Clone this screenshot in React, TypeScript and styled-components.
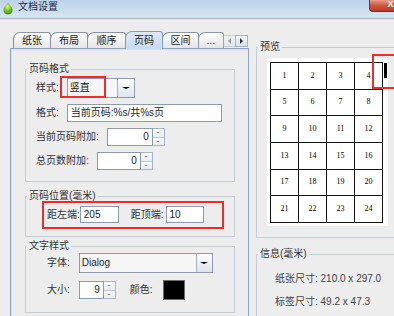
import React from "react";
import styled, { createGlobalStyle } from "styled-components";

const GlobalStyle = createGlobalStyle`
  html, body { margin: 0; padding: 0; }
  body {
    font-family: "Liberation Sans", "Noto Sans CJK SC", sans-serif;
    font-size: 10px;
    line-height: 12px;
    color: #333;
    background: #ededed;
  }
  *, *::before, *::after { box-sizing: border-box; }
`;

const Window = styled.div`
  width: 394px;
  height: 316px;
  overflow: hidden;
  display: flex;
  flex-direction: column;
  background: #ededed;
`;

const TitleBar = styled.div`
  height: 19px;
  flex-shrink: 0;
  display: flex;
  align-items: flex-start;
  background: linear-gradient(180deg, #bcd1ea 0%, #cddded 55%, #d8e5f3 100%);
  border-bottom: 1px solid #a3b1c2;
`;

const AppIcon = styled.svg`
  margin: 2px 0 0 3px;
  flex-shrink: 0;
`;

const Title = styled.span`
  margin: 1px 0 0 5px;
  color: #1e2a38;
`;

const CloseButton = styled.div`
  margin-left: auto;
  margin-right: -18px;
  width: 43px;
  height: 12px;
  flex-shrink: 0;
  border: 1px solid #7a2c22;
  border-top: none;
  border-radius: 0 0 4px 4px;
  background: linear-gradient(180deg, #e79a88 0%, #d0563f 50%, #b83a24 100%);
  color: #fff;
  font-weight: bold;
  font-size: 9px;
  line-height: 9px;
  text-align: center;
`;

const Body = styled.div`
  flex: 1;
  display: flex;
  min-height: 0;
`;

const LeftCol = styled.div`
  width: 239px;
  flex-shrink: 0;
  margin-left: 10px;
  padding-top: 12px;
  display: flex;
  flex-direction: column;
`;

const TabStrip = styled.div`
  height: 17px;
  flex-shrink: 0;
  display: flex;
  align-items: flex-end;
  padding-left: 4px;
`;

const Tab = styled.div<{ $w: number; $active?: boolean }>`
  position: relative;
  z-index: ${(p) => (p.$active ? 2 : 1)};
  width: ${(p) => p.$w}px;
  height: ${(p) => (p.$active ? 18 : 16)}px;
  margin-left: -1px;
  margin-bottom: ${(p) => (p.$active ? -1 : 0)}px;
  border: 1px solid ${(p) => (p.$active ? "#7f9cc2" : "#8a96a5")};
  border-bottom: none;
  border-radius: 7px 3px 0 0;
  background: ${(p) =>
    p.$active
      ? "linear-gradient(180deg, #dde9f7 0%, #c8dbf1 100%)"
      : "linear-gradient(180deg, #fdfdfd 0%, #e5e5e5 100%)"};
  display: flex;
  align-items: center;
  justify-content: center;
  color: #222;
  white-space: nowrap;
  overflow: hidden;
`;

const ScrollButton = styled.div<{ $disabled?: boolean }>`
  position: relative;
  z-index: 3;
  width: 13px;
  height: 12px;
  margin: 0 0 1px -1px;
  border: 1px solid #a7b5c6;
  background: linear-gradient(180deg, #f4f7fa 0%, #d9e2ec 100%);
  display: flex;
  align-items: center;
  justify-content: center;
  opacity: ${(p) => (p.$disabled ? 0.55 : 1)};
`;

type Dir = "up" | "down" | "left" | "right";

const Tri = styled.span<{ $dir: Dir; $s: number; $c: string }>`
  width: 0;
  height: 0;
  ${({ $dir, $s, $c }) => {
    const h = Math.round($s * 0.6);
    if ($dir === "up")
      return `border-left:${$s}px solid transparent;border-right:${$s}px solid transparent;border-bottom:${h}px solid ${$c};`;
    if ($dir === "down")
      return `border-left:${$s}px solid transparent;border-right:${$s}px solid transparent;border-top:${h}px solid ${$c};`;
    if ($dir === "left")
      return `border-top:${$s}px solid transparent;border-bottom:${$s}px solid transparent;border-right:${h + 1}px solid ${$c};`;
    return `border-top:${$s}px solid transparent;border-bottom:${$s}px solid transparent;border-left:${h + 1}px solid ${$c};`;
  }}
`;

const TabPanel = styled.div`
  flex: 1;
  border: 1px solid #8ea6c5;
  border-bottom: none;
  box-shadow: inset 1px 1px 0 #d4e0ee;
  padding: 14px 13px 0 14px;
  display: flex;
  flex-direction: column;
`;

const Group = styled.fieldset<{ $mt?: number }>`
  margin: ${(p) => p.$mt ?? 0}px 0 0 0;
  padding: 0;
  border: 1px solid #c4ccd6;
  min-width: 0;
`;

const Legend = styled.legend`
  padding: 0 2px;
  margin-left: 1px;
  line-height: 12px;
  color: #333;
`;

const GroupBody = styled.div<{ $pad: string; $gap?: number }>`
  padding: ${(p) => p.$pad};
  display: flex;
  flex-direction: column;
  gap: ${(p) => p.$gap ?? 0}px;
`;

const Row = styled.div<{ $h?: number }>`
  position: relative;
  display: flex;
  align-items: center;
  height: ${(p) => p.$h ?? 18}px;
`;

const Label = styled.span<{ $mr?: number; $ml?: number }>`
  margin-right: ${(p) => p.$mr ?? 8}px;
  margin-left: ${(p) => p.$ml ?? 0}px;
  white-space: nowrap;
  color: #333;
`;

const Field = styled.div<{ $w: number; $h?: number; $right?: boolean }>`
  width: ${(p) => p.$w}px;
  height: ${(p) => p.$h ?? 18}px;
  border: 1px solid #8c9bb0;
  background: #fff;
  padding: 0 3px;
  line-height: ${(p) => (p.$h ?? 18) - 2}px;
  color: #222;
  text-align: ${(p) => (p.$right ? "right" : "left")};
  white-space: nowrap;
  overflow: hidden;
`;

const Combo = styled.div<{ $w: number }>`
  width: ${(p) => p.$w}px;
  height: 20px;
  display: flex;
  border: 1px solid #8c9bb0;
  background: #f6f6f6;
`;

const ComboText = styled.span`
  flex: 1;
  padding-left: 2px;
  line-height: 18px;
  color: #222;
`;

const ComboButton = styled.div<{ $w: number }>`
  width: ${(p) => p.$w}px;
  border-left: 1px solid #a5b2c2;
  background: linear-gradient(180deg, #fdfdfe 0%, #dde4ec 100%);
  display: flex;
  align-items: center;
  justify-content: center;
`;

const SpinButtons = styled.div`
  width: 12px;
  height: 18px;
  display: flex;
  flex-direction: column;
  border: 1px solid #a9b5c4;
  border-left: none;
`;

const SpinHalf = styled.div`
  flex: 1;
  display: flex;
  align-items: center;
  justify-content: center;
  background: linear-gradient(180deg, #fbfcfd 0%, #e7ecf1 100%);
  & + & {
    border-top: 1px solid #c2ccd8;
  }
`;

const Swatch = styled.div`
  width: 22px;
  height: 20px;
  background: #000;
  border: 1px solid #6a6a6a;
`;

const RedMark = styled.div`
  position: absolute;
  border: 2px solid #ee2c2c;
  pointer-events: none;
`;

const RedFrame = styled.div`
  margin: -1px 0 0 16px;
  width: 182px;
  border: 2px solid #ee2c2c;
  padding: 3px 0 4px 3px;
  display: flex;
  align-items: center;
`;

const RightCol = styled.div`
  width: 150px;
  flex-shrink: 0;
  margin-left: 7px;
  padding-top: 22px;
  display: flex;
  flex-direction: column;
`;

const PreviewArea = styled.div`
  position: relative;
  width: 121px;
  height: 168px;
  background: #fff;
  padding: 4px 0 0 3px;
`;

const PageGrid = styled.div`
  width: 113px;
  height: 161px;
  display: grid;
  grid-template-columns: repeat(4, 1fr);
  grid-template-rows: repeat(6, 1fr);
  gap: 1px;
  border: 1px solid #111;
  background: #111;
`;

const Cell = styled.div`
  background: #fff;
  display: flex;
  align-items: center;
  justify-content: center;
  font-family: "Liberation Serif", serif;
  font-size: 8px;
  color: #000;
`;

const Cursor = styled.div`
  position: absolute;
  left: 117px;
  top: 5px;
  width: 3px;
  height: 15px;
  background: #000;
`;

const InfoLine = styled.div`
  line-height: 12px;
  color: #444;
  white-space: nowrap;
`;

function Spinner({ w, value }: { w: number; value: string }) {
  return (
    <>
      <Field $w={w} $right>
        {value}
      </Field>
      <SpinButtons>
        <SpinHalf>
          <Tri $dir="up" $s={2} $c="#666" />
        </SpinHalf>
        <SpinHalf>
          <Tri $dir="down" $s={2} $c="#666" />
        </SpinHalf>
      </SpinButtons>
    </>
  );
}

const tabs = [
  { name: "纸张", w: 38 },
  { name: "布局", w: 38 },
  { name: "顺序", w: 39 },
  { name: "页码", w: 38, active: true },
  { name: "区间", w: 37 },
  { name: "...", w: 26 },
];

export default function App() {
  const pages = Array.from({ length: 24 }, (_, i) => i + 1);
  return (
    <>
      <GlobalStyle />
      <Window>
        <TitleBar>
          <AppIcon width="10" height="13" viewBox="0 0 10 13">
            <defs>
              <radialGradient id="drop" cx="45%" cy="35%" r="70%">
                <stop offset="0" stopColor="#f1f78a" />
                <stop offset="0.45" stopColor="#7fcc2e" />
                <stop offset="1" stopColor="#2f7d12" />
              </radialGradient>
            </defs>
            <path
              d="M5 0.5 C6.2 2.6 9.5 4.6 9.5 8 A4.5 4.5 0 0 1 0.5 8 C0.5 4.6 3.8 2.6 5 0.5Z"
              fill="url(#drop)"
            />
          </AppIcon>
          <Title>文档设置</Title>
          <CloseButton>X</CloseButton>
        </TitleBar>
        <Body>
          <LeftCol>
            <TabStrip>
              {tabs.map((t) => (
                <Tab key={t.name} $w={t.w} $active={t.active}>
                  {t.name}
                </Tab>
              ))}
              <ScrollButton $disabled>
                <Tri $dir="left" $s={3} $c="#556" />
              </ScrollButton>
              <ScrollButton>
                <Tri $dir="right" $s={3} $c="#334" />
              </ScrollButton>
            </TabStrip>
            <TabPanel>
              <Group>
                <Legend>页码格式</Legend>
                <GroupBody $pad="3px 0 11px 10px" $gap={6}>
                  <Row $h={20}>
                    <Label>样式:</Label>
                    <Combo $w={68}>
                      <ComboText>竖直</ComboText>
                      <ComboButton $w={17}>
                        <Tri $dir="down" $s={4} $c="#000" />
                      </ComboButton>
                    </Combo>
                    <RedMark style={{ left: 24, top: -2, width: 46, height: 22 }} />
                  </Row>
                  <Row>
                    <Label>格式:</Label>
                    <Field $w={155}>当前页码:%s/共%s页</Field>
                  </Row>
                  <Row>
                    <Label>当前页码附加:</Label>
                    <Spinner w={46} value="0" />
                  </Row>
                  <Row>
                    <Label>总页数附加:</Label>
                    <Spinner w={44} value="0" />
                  </Row>
                </GroupBody>
              </Group>

              <Group $mt={8}>
                <Legend>页码位置(毫米)</Legend>
                <GroupBody $pad="0 0 7px 0">
                  <RedFrame>
                    <Label $mr={0}>距左端:</Label>
                    <Field $w={39} $h={17}>
                      205
                    </Field>
                    <Label $ml={12} $mr={2}>
                      距顶端:
                    </Label>
                    <Field $w={38} $h={17}>
                      10
                    </Field>
                  </RedFrame>
                </GroupBody>
              </Group>

              <Group $mt={3}>
                <Legend>文字样式</Legend>
                <GroupBody $pad="1px 0 12px 21px" $gap={7}>
                  <Row $h={20}>
                    <Label $mr={9}>字体:</Label>
                    <Combo $w={134}>
                      <ComboText>Dialog</ComboText>
                      <ComboButton $w={16}>
                        <Tri $dir="down" $s={4} $c="#000" />
                      </ComboButton>
                    </Combo>
                  </Row>
                  <Row $h={20}>
                    <Label $mr={9}>大小:</Label>
                    <Spinner w={25} value="9" />
                    <Label $ml={14} $mr={10}>
                      颜色:
                    </Label>
                    <Swatch />
                  </Row>
                </GroupBody>
              </Group>
            </TabPanel>
          </LeftCol>

          <RightCol>
            <Group>
              <Legend>预览</Legend>
              <GroupBody $pad="5px 0 11px 10px">
                <PreviewArea>
                  <PageGrid>
                    {pages.map((n) => (
                      <Cell key={n}>{n}</Cell>
                    ))}
                  </PageGrid>
                  <Cursor />
                  <RedMark style={{ left: 105, top: -4, width: 40, height: 35 }} />
                </PreviewArea>
              </GroupBody>
            </Group>
            <Group $mt={10}>
              <Legend>信息(毫米)</Legend>
              <GroupBody $pad="13px 0 12px 18px" $gap={11}>
                <InfoLine>纸张尺寸: 210.0 x 297.0</InfoLine>
                <InfoLine>标签尺寸: 49.2 x 47.3</InfoLine>
              </GroupBody>
            </Group>
          </RightCol>
        </Body>
      </Window>
    </>
  );
}
